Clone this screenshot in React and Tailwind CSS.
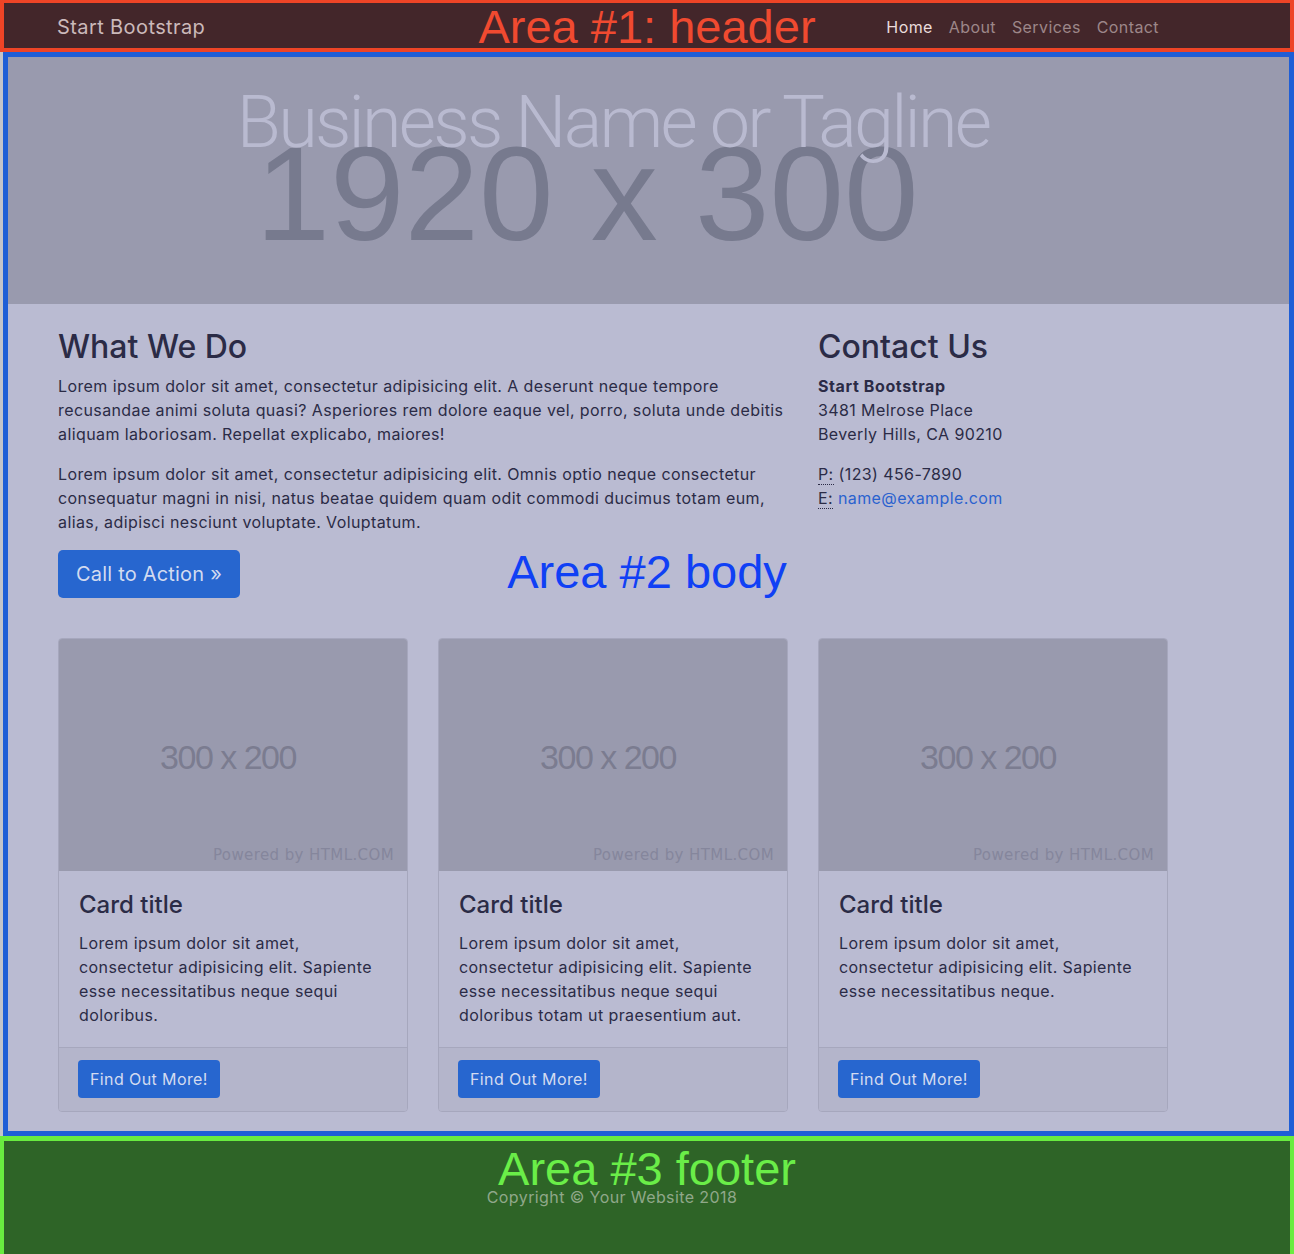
import React from "react";

const cards = [
  "Lorem ipsum dolor sit amet, consectetur adipisicing elit. Sapiente esse necessitatibus neque sequi doloribus.",
  "Lorem ipsum dolor sit amet, consectetur adipisicing elit. Sapiente esse necessitatibus neque sequi doloribus totam ut praesentium aut.",
  "Lorem ipsum dolor sit amet, consectetur adipisicing elit. Sapiente esse necessitatibus neque.",
];

function Card({ text }) {
  return (
    <div className="flex flex-col rounded-[4px] border border-[#a6a7bd] bg-[#babbd2] overflow-hidden">
      <div className="relative h-[232px] bg-[#999aae]">
        <div className="absolute inset-0 flex items-center justify-center pr-[10px]">
          <span className="font-['Liberation_Sans',Arial,sans-serif] text-[34px] leading-none tracking-[-1.5px] text-[#7b7c90] mt-[4px]">
            300 x 200
          </span>
        </div>
        <span className="absolute right-[13px] top-[209px] font-['DejaVu_Sans',sans-serif] text-[15px] leading-none tracking-[0.4px] text-[#85869c]">
          Powered by HTML.COM
        </span>
      </div>
      <div className="flex-1 px-[20px] pt-[20px] pb-[20px]">
        <h4 className="text-[24px] leading-[28px] font-medium mb-[12px]">Card title</h4>
        <p className="text-[16px] leading-[24px] tracking-[0.4px]">{text}</p>
      </div>
      <div className="border-t border-[#a6a7bd] bg-[#b4b5cb] px-[19px] pt-[12px] pb-[13px]">
        <a className="inline-block rounded-[4px] bg-[#2766cf] px-[12px] h-[38px] leading-[38px] text-[16px] tracking-[0.4px] text-[#d3dbf0]">
          Find Out More!
        </a>
      </div>
    </div>
  );
}

export default function App() {
  return (
    <div className="relative w-[1294px] h-[1254px] overflow-hidden bg-[#c4c4ca] text-[#2b2b46] font-['Inter','Noto_Sans',sans-serif]">
      {/* Header */}
      <header className="h-[52px] border-t-[3px] border-b-[4px] border-x-[4px] border-[#ee4426] bg-[#43262a] flex items-center">
        <div className="ml-[53px] w-[1110px] flex items-center justify-between mt-[2px]">
          <span className="text-[20px] tracking-[0.4px] text-[#cbb9ba]">Start Bootstrap</span>
          <nav className="flex text-[16px] tracking-[0.4px]">
            <a className="px-[8px] text-[#eadcdc]">Home</a>
            <a className="px-[8px] text-[#9d8789]">About</a>
            <a className="px-[8px] text-[#9d8789]">Services</a>
            <a className="px-[8px] text-[#9d8789]">Contact</a>
          </nav>
        </div>
      </header>

      {/* Body */}
      <main className="ml-[3px] w-[1291px] border-[5px] border-[#1f5ed6] bg-[#babbd2]">
        <section className="relative h-[247px] bg-[#999aae] overflow-hidden">
          <span className="absolute left-[579px] top-[70px] -translate-x-1/2 whitespace-nowrap font-['Liberation_Sans',Arial,sans-serif] text-[134px] leading-none text-[#777a8e]">
            1920 x 300
          </span>
          <div className="relative ml-[50px] w-[1110px] pt-[23px] text-center">
            <h1 className="font-['Roboto',sans-serif] font-light text-[72px] leading-[86px] tracking-[-2.8px] text-[#b9bad0]">
              Business Name or Tagline
            </h1>
          </div>
        </section>

        <section className="ml-[50px] w-[1110px] pt-[24px] pb-[19px]">
          <div className="grid grid-cols-[730px_350px] gap-x-[30px]">
            <div>
              <h2 className="text-[32px] leading-[38px] font-medium mb-[8px]">What We Do</h2>
              <p className="text-[16px] leading-[24px] tracking-[0.4px] mb-[16px]">
                Lorem ipsum dolor sit amet, consectetur adipisicing elit. A deserunt neque tempore recusandae animi soluta quasi? Asperiores rem dolore eaque vel, porro, soluta unde debitis aliquam laboriosam. Repellat explicabo, maiores!
              </p>
              <p className="text-[16px] leading-[24px] tracking-[0.4px] mb-[16px]">
                Lorem ipsum dolor sit amet, consectetur adipisicing elit. Omnis optio neque consectetur consequatur magni in nisi, natus beatae quidem quam odit commodi ducimus totam eum, alias, adipisci nesciunt voluptate. Voluptatum.
              </p>
              <a className="inline-block h-[48px] w-[182px] rounded-[5px] bg-[#2766cf] text-center text-[20px] leading-[48px] tracking-[0.2px] text-[#d3dbf0]">
                Call to Action »
              </a>
            </div>
            <div>
              <h2 className="text-[32px] leading-[38px] font-medium mb-[8px]">Contact Us</h2>
              <address className="not-italic text-[16px] leading-[24px] tracking-[0.4px] mb-[16px]">
                <strong className="font-bold tracking-[0.6px]">Start Bootstrap</strong>
                <br />
                3481 Melrose Place
                <br />
                Beverly Hills, CA 90210
              </address>
              <address className="not-italic text-[16px] leading-[24px] tracking-[0.4px]">
                <abbr title="Phone" className="no-underline border-b border-dotted border-[#2b2b46]">P:</abbr> (123) 456-7890
                <br />
                <abbr title="Email" className="no-underline border-b border-dotted border-[#2b2b46]">E:</abbr>{" "}
                <a className="text-[#2a62cf]">name@example.com</a>
              </address>
            </div>
          </div>

          <div className="mt-[40px] grid grid-cols-3 gap-x-[30px]">
            {cards.map((t, i) => (
              <Card key={i} text={t} />
            ))}
          </div>
        </section>
      </main>

      {/* Footer */}
      <footer className="h-[119px] border-t-[5px] border-x-[4px] border-b-[1px] border-[#69ec40] bg-[#2e6427]">
        <div className="ml-[53px] w-[1110px] pt-[44px] text-center">
          <p className="text-[16px] leading-[24px] tracking-[0.4px] text-[#90a88a]">Copyright © Your Website 2018</p>
        </div>
      </footer>

      {/* Annotation labels */}
      <div className="absolute left-0 right-0 top-[3px] text-center font-['Liberation_Sans',Arial,sans-serif] text-[47px] leading-none text-[#f04a30] pointer-events-none">
        Area #1: header
      </div>
      <div className="absolute left-0 right-0 top-[548px] text-center font-['Liberation_Sans',Arial,sans-serif] text-[47px] leading-none text-[#1040f5] pointer-events-none">
        Area #2 body
      </div>
      <div className="absolute left-0 right-0 top-[1145px] text-center font-['Liberation_Sans',Arial,sans-serif] text-[47px] leading-none text-[#6aee48] pointer-events-none">
        Area #3 footer
      </div>
    </div>
  );
}
